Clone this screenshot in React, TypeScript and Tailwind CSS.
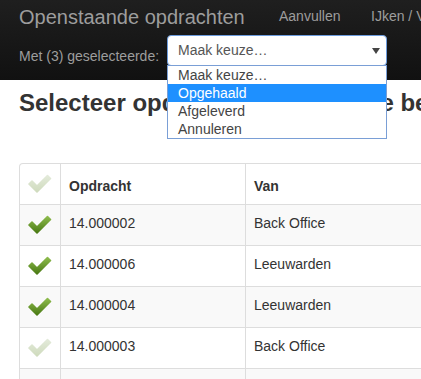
import React from 'react';

type Row = { id: string; from: string; checked: boolean };

const rows: Row[] = [
  { id: '14.000002', from: 'Back Office', checked: true },
  { id: '14.000006', from: 'Leeuwarden', checked: true },
  { id: '14.000004', from: 'Leeuwarden', checked: true },
  { id: '14.000003', from: 'Back Office', checked: false },
  { id: '14.000001', from: 'Leeuwarden', checked: false },
];

const options = ['Maak keuze…', 'Opgehaald', 'Afgeleverd', 'Annuleren'];

function Check({ on, uid }: { on: boolean; uid: string }) {
  const top = on ? '#8dbb4c' : '#e3eada';
  const bottom = on ? '#4a7a14' : '#cfdbbd';
  return (
    <svg width="24" height="24" viewBox="0 0 24 24" className="block">
      <defs>
        <linearGradient id={uid} x1="0" y1="0" x2="0" y2="1">
          <stop offset="0" stopColor={top} />
          <stop offset="1" stopColor={bottom} />
        </linearGradient>
      </defs>
      <path
        d="M1 12 L4 9 L9 14 L19.5 3.5 L22.5 6.5 L9 20 Z"
        fill={`url(#${uid})`}
        stroke={`url(#${uid})`}
        strokeWidth="1.6"
        strokeLinejoin="round"
      />
    </svg>
  );
}

export default function App() {
  return (
    <div className="relative w-full h-[379px] overflow-hidden bg-white font-['Liberation_Sans',Arial,sans-serif]">
      {/* Navbar */}
      <nav className="h-[80px] bg-gradient-to-b from-[#1f1f1f] to-[#111111] pl-[19px] text-[#9d9d9d]">
        <div className="flex h-[32px] items-start whitespace-nowrap">
          <span className="mt-[7px] w-[260px] shrink-0 text-[20px] leading-[20px]">Openstaande opdrachten</span>
          <span className="mt-[6px] w-[92px] shrink-0 text-[14px] leading-[20px]">Aanvullen</span>
          <span className="mt-[6px] shrink-0 text-[14px] leading-[20px]">IJken / Verzenden</span>
        </div>
        <div className="flex items-start whitespace-nowrap">
          <span className="mt-[14px] w-[148px] shrink-0 text-[14px] leading-[20px]">Met (3) geselecteerde:</span>
          <div className="relative z-10 mt-[3px] w-[220px] shrink-0">
            <div className="flex h-[31px] items-center rounded-[4px] border border-[#6c9bdc] bg-white pl-[10px] text-[14px] text-[#555]">
              Maak keuze…
              <svg width="8" height="6" viewBox="0 0 8 6" className="absolute right-[7px] top-[13px]">
                <path d="M0 0 H8 L4 6 Z" fill="#444" />
              </svg>
            </div>
            {/* open dropdown list */}
            <ul className="absolute left-0 top-[30px] w-[220px] border border-[#7a9fd6] bg-white text-[14px] text-[#444]">
              {options.map((o, i) => (
                <li
                  key={o}
                  className={`h-[18px] pl-[10px] leading-[18px] ${i === 1 ? 'bg-[#1e90ff] text-white' : ''}`}
                >
                  {o}
                </li>
              ))}
            </ul>
          </div>
        </div>
      </nav>

      <h2 className="ml-[19px] mt-[10px] whitespace-nowrap text-[24px] font-bold leading-[26px] text-[#333]">
        Selecteer opdrachten om deze te bewerken
      </h2>

      {/* Table */}
      <div className="ml-[19px] mt-[47px] w-[700px] rounded-t-[4px] border-l border-r border-t border-[#ddd] text-[14px] text-[#333]">
        <div className="flex h-[41px] border-b border-[#ddd]">
          <div className="w-[40px] px-[8px] pt-[8px]">
            <Check on={false} uid="hdr" />
          </div>
          <div className="flex w-[185px] items-end border-l border-[#ddd] px-[8px] pb-[8px] font-bold leading-[20px]">
            Opdracht
          </div>
          <div className="flex flex-1 items-end border-l border-[#ddd] px-[8px] pb-[8px] font-bold leading-[20px]">
            Van
          </div>
        </div>
        {rows.map((r, i) => (
          <div
            key={r.id}
            className={`flex h-[41px] border-b border-[#ddd] ${i % 2 === 0 ? 'bg-[#f9f9f9]' : 'bg-white'}`}
          >
            <div className="w-[40px] px-[8px] pt-[8px]">
              <Check on={r.checked} uid={`c${i}`} />
            </div>
            <div className="w-[185px] border-l border-[#ddd] px-[8px] pt-[8px] leading-[20px]">{r.id}</div>
            <div className="flex-1 border-l border-[#ddd] px-[8px] pt-[8px] leading-[20px]">{r.from}</div>
          </div>
        ))}
      </div>
    </div>
  );
}
